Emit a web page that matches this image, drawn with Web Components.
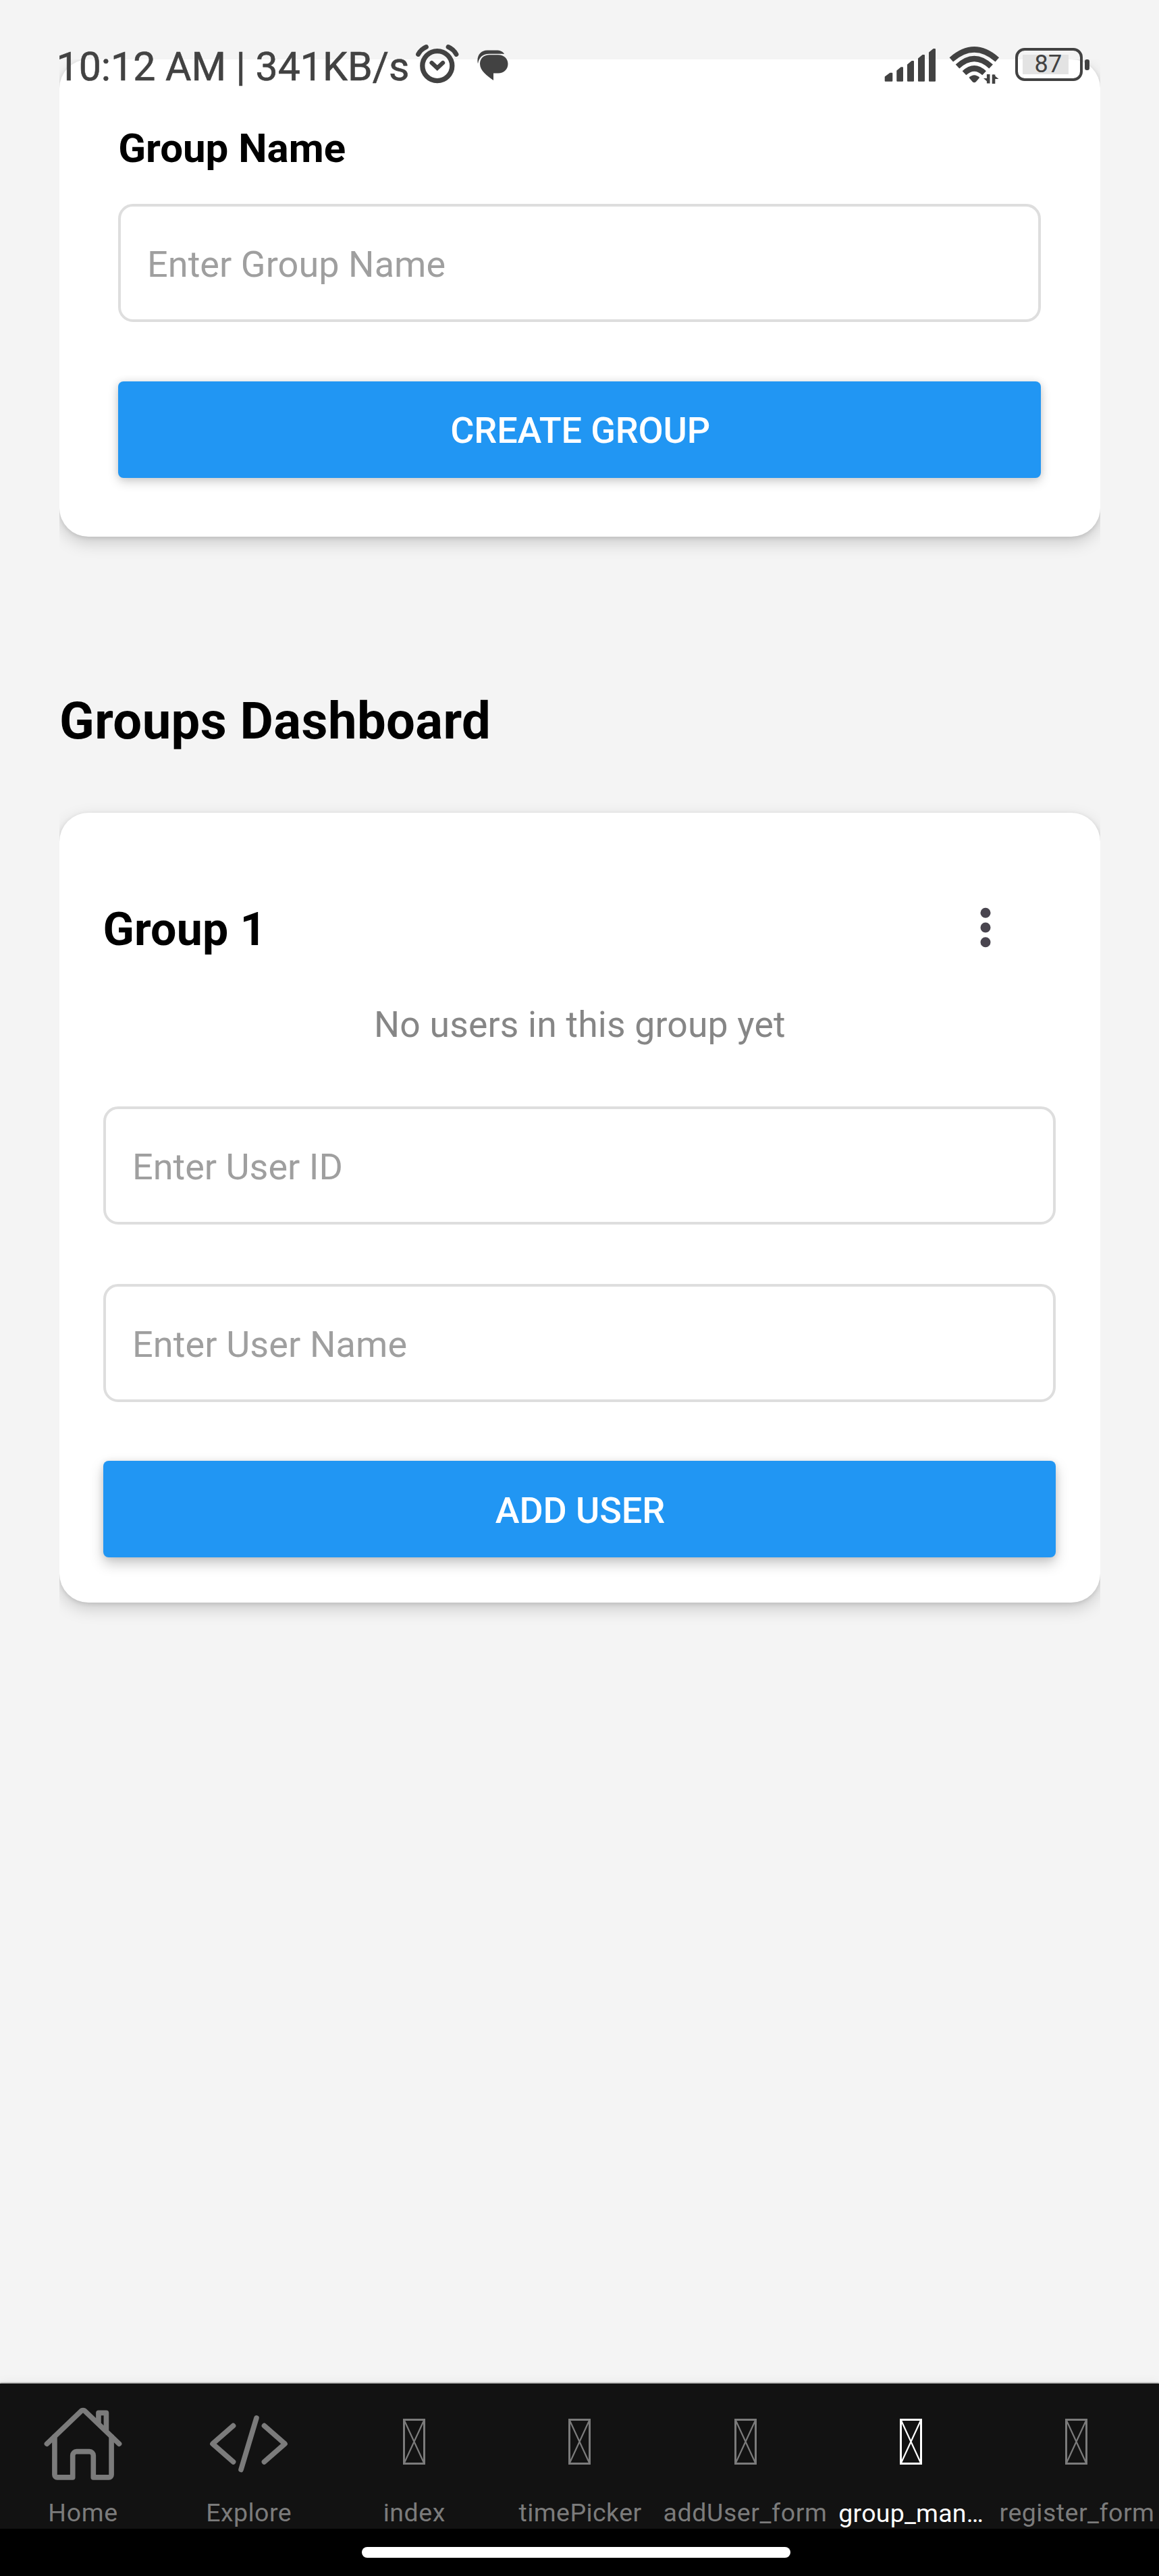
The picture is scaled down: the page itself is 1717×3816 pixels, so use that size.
<!DOCTYPE html>
<html lang="en">
<head>
<meta charset="utf-8">
<title>Groups</title>
<style>
html,body{margin:0;padding:0}
body{font-family:Roboto,"Liberation Sans",sans-serif;background:#f4f4f4}
</style>
</head>
<body>
<groups-app></groups-app>
<script>
const define = (name, html, setup) => {
  const t = document.createElement('template');
  t.innerHTML = html;
  customElements.define(name, class extends HTMLElement {
    connectedCallback() {
      if (this.shadowRoot) return;
      this.attachShadow({ mode: 'open' }).append(t.content.cloneNode(true));
      if (setup) setup(this, this.shadowRoot);
    }
  });
};
const pen = document.createElement('canvas').getContext('2d');

// Single line of text whose ink spans exactly the "ink" width.
define('fit-text', `<style>
:host{display:block;flex:none;white-space:nowrap}
span{display:inline-block}
</style><span><slot></slot></span>`, (el, root) => {
  const size = +el.getAttribute('size'), weight = el.getAttribute('weight') || 400;
  const ink = +el.getAttribute('ink'), text = el.textContent;
  pen.font = `${weight} ${size}px Roboto`;
  const m = pen.measureText(text);
  const gap = (ink - m.actualBoundingBoxRight - m.actualBoundingBoxLeft) / (text.length - 1);
  el.style.cssText += `;width:${ink}px;height:${size * 1.2}px;line-height:${size * 1.2}px;font-size:${size}px;font-weight:${weight}`;
  const s = root.querySelector('span');
  s.style.letterSpacing = gap + 'px';
  s.style.marginLeft = m.actualBoundingBoxLeft + 'px';
});

define('text-field', `<style>
:host{display:flex;box-sizing:border-box;align-items:center;height:175px;border:4px solid #dedede;border-radius:22px;padding:5px 0 0 43px;color:#9f9f9f;background:#fff}
</style><slot></slot>`);

define('action-button', `<style>
:host{display:flex;box-sizing:border-box;align-items:center;justify-content:center;height:143px;border-radius:8px;padding-top:5px;background:#2196f3;color:#fff;box-shadow:0 6px 16px rgba(0,0,0,.17),0 0 12px rgba(0,0,0,.1)}
:host([raised]){box-shadow:0 9px 20px rgba(0,0,0,.22),0 1px 10px rgba(0,0,0,.1)}
</style><slot></slot>`);

define('surface-card', `<style>
:host{display:block;clip-path:inset(-60px 0 -60px 0)}
:host([flush]){clip-path:inset(0 0 -60px 0)}
div{display:flex;flex-direction:column;box-sizing:border-box;background:#fff;border-radius:43px;box-shadow:0 9px 24px rgba(0,0,0,.17),0 2px 7px rgba(0,0,0,.11)}
:host([flush]) div{height:707px;padding:95.5px 88px 0 87px}
:host([group]) div{height:1170.5px;padding:133px 66px 0 65px}
</style><div><slot></slot></div>`);

define('dots-menu', `<style>:host{display:block;width:16px;height:66px;margin:0 96px 6px 0}svg{display:block}</style>
<svg width="16" height="66" viewBox="0 0 16 66" fill="#49454f"><circle cx="8" cy="11.3" r="7.5"/><circle cx="8" cy="33" r="7.5"/><circle cx="8" cy="54.8" r="7.5"/></svg>`);

define('status-bar', `<style>
:host{display:flex;position:absolute;top:0;left:0;width:1717px;height:140px;box-sizing:border-box;padding:63px 0 0 87.5px;color:#424242;align-items:flex-start}
.clock{margin:1px 11px 0 0;-webkit-text-stroke:.6px #424242}
svg{display:block;flex:none}
.msg{margin-left:26px}
.sig{margin-left:auto}
.wifi{margin-left:18px}
.bat{display:flex;align-items:center;width:110px;height:49px;margin:8px 103px 0 22px;}
.cell{position:relative;display:flex;box-sizing:border-box;width:100px;height:48.5px;border:4.6px solid #424242;border-radius:14px;align-items:center;padding-left:7px}
.fill{display:flex;width:68px;height:29px;background:#e3e3e3;align-items:center;padding-left:0}
.fill fit-text{margin:1px 0 0 18.5px}
.nub{width:6.5px;height:16px;border-radius:3px;background:#424242;margin-left:3.3px}
</style>
<fit-text class="clock" size="59" ink="516.5">10:12 AM | 341KB/s</fit-text>
<svg width="66" height="62" viewBox="615 63 66 62" fill="none" stroke="#424242"><circle cx="647.8" cy="97.6" r="22" stroke-width="7.3"/><path d="M619.5 80.500C622 76 626 71.800 631.500 69.500M676 80.500C673.500 76 669.500 71.800 664 69.500" stroke-width="6.800" stroke-linecap="round"/><path d="M639.500 93l8.300 7.800 8.300-7.800" stroke-width="6.200" stroke-linecap="round"/></svg>
<svg class="msg" width="46" height="62" viewBox="707 63 46 62" fill="#424242"><path d="M708 94.500C705.500 84 711 74.500 722 74.500H735C741 74.500 745.500 76.500 747 80C743 79.500 740 79.700 735 79.700H725C715 79.700 709.500 85 708 94.500Z"/><path d="M725 81.300H738C746.500 81.300 752.500 87 752.500 94.700S746.500 108.400 738 108.400H731V119C721.500 112.500 711 104.500 711 94.500C711 86.500 717 81.300 725 81.300Z"/></svg>
<svg class="sig" width="78" height="62" viewBox="1310 63 78 62" fill="#424242" stroke="#424242" stroke-width="2" stroke-linejoin="round"><path d="M1311.700 114l7-5.300h2.600v11h-9.600zM1329.300 105l5.700-4.700h2v19.400h-7.700zM1345 96l6-5h2v28.700h-8zM1361 87l6-5h2v37.700h-8zM1377 78l6-5h2v46.700h-8z"/></svg>
<svg class="wifi" width="76" height="62" viewBox="1406 63 76 62" fill="none" stroke="#424242" stroke-width="8.300"><path d="M1409.300 88.300Q1443.300 58.500 1477.300 88.300M1418.500 98.500Q1443.300 75.500 1468.100 98.500M1428.500 108.300Q1443.300 94.500 1458.100 108.300"/><path d="M1435.500 115Q1443.300 107.500 1451.200 115L1446 121Q1443.300 123.500 1440.600 121Z" fill="#424242" stroke="none"/><path d="M1464.200 110v13.500M1472 124v-13.500" stroke-width="4.600"/><path d="M1465.500 123.500l-8.500-7.500h8.500zM1471 110l8.500 7h-8.500z" fill="#424242" stroke="none"/></svg>
<div class="bat"><div class="cell"><div class="fill"><fit-text size="36" ink="38.500">87</fit-text></div></div><div class="nub"></div></div>`);

const icons = {
  home: '<g transform="translate(.8) scale(.2391)" stroke-width="32" stroke-linecap="round" stroke-linejoin="round"><path d="M80 212v236a16 16 0 0016 16h96V328a24 24 0 0124-24h80a24 24 0 0124 24v136h96a16 16 0 0016-16V212"/><path d="M480 256L266.890 52c-5-5.280-16.690-5.340-21.780 0L32 256M400 179V64h-48v69"/></g>',
  code: '<path transform="translate(.3) scale(.2391)" stroke-width="32" stroke-linecap="round" stroke-linejoin="round" d="M160 368L32 256l128-112M352 368l128-112-128-112M304 96l-96 320"/>',
  missing: '<path d="M46.500 25.500h30v65h-30z" stroke-width="3"/><path d="M46.500 25.500l30 65M76.500 25.500l-30 65" stroke-width="2.200"/>'
};
define('nav-tab', `<style>
:host{display:flex;flex:1 1 0;min-width:0;flex-direction:column;align-items:center;color:#7b7b7b;padding-top:28.300px}
:host([active]){color:#fff}
svg{display:block;flex:none;margin-bottom:18.200px}
</style><svg width="122.400" height="122.400" viewBox="0 0 122.400 122.400" fill="none" stroke="currentColor"></svg><slot></slot>`,
(el, root) => { root.querySelector('svg').innerHTML = icons[el.getAttribute('icon') || 'missing']; });

define('tab-bar', `<style>
:host{display:block;margin-top:auto}
nav{display:flex;height:215px;background:#121212;box-shadow:0 -1px 2px rgba(0,0,0,.5),0 -4px 14px rgba(0,0,0,.04)}
footer{display:flex;height:70px;background:#000;justify-content:center;align-items:flex-start;padding:0 10px 0 0}
i{display:block;width:635px;height:15.700px;border-radius:8px;background:#fff;margin-top:27.300px}
</style><nav>
<nav-tab icon="home"><fit-text size="37.500" ink="99" style="margin-left:2.300px">Home</fit-text></nav-tab>
<nav-tab icon="code"><fit-text size="37.500" ink="122.600" style="margin-left:3px">Explore</fit-text></nav-tab>
<nav-tab><fit-text size="37.500" ink="89" style="margin-left:2px">index</fit-text></nav-tab>
<nav-tab><fit-text size="37.500" ink="182" style="margin-left:2px">timePicker</fit-text></nav-tab>
<nav-tab><fit-text size="37.500" ink="238.500">addUser_form</fit-text></nav-tab>
<nav-tab active><fit-text size="37.500" ink="211.500" style="margin-top:1.500px">group_man…</fit-text></nav-tab>
<nav-tab><fit-text size="37.500" ink="225.500" style="margin-left:2px">register_form</fit-text></nav-tab>
</nav><footer><i></i></footer>`);

define('groups-app', `<style>
:host{display:flex;position:relative;flex-direction:column;width:1717px;height:3816px;background:#f4f4f4;overflow:hidden;color:#000}
main{display:flex;flex-direction:column;padding:88px 87px 0 88px}
.title{margin:228.200px 0 89.200px 3px}
header{display:flex;justify-content:space-between;align-items:center;height:81.600px;padding-left:2.500px}
header fit-text{margin-top:1.400px}
.empty{color:#868686;align-self:center;margin:67.400px 0 89.300px 3px}
</style>
<main>
<surface-card flush>
<fit-text size="60" weight="700" ink="333.500" style="margin:0 0 46.500px 2.200px">Group Name</fit-text>
<text-field><fit-text size="54" ink="436.500">Enter Group Name</fit-text></text-field>
<action-button style="margin-top:87.500px"><fit-text size="54" weight="500" ink="381.500" style="margin-left:3px">CREATE GROUP</fit-text></action-button>
</surface-card>
<fit-text class="title" size="76" weight="700" ink="632">Groups Dashboard</fit-text>
<surface-card group>
<header><fit-text size="68" weight="700" ink="227">Group 1</fit-text><dots-menu></dots-menu></header>
<fit-text class="empty" size="53.500" ink="604">No users in this group yet</fit-text>
<text-field><fit-text size="54" ink="305.500">Enter User ID</fit-text></text-field>
<text-field style="margin-top:88px"><fit-text size="54" ink="401.500">Enter User Name</fit-text></text-field>
<action-button raised style="margin-top:87px"><fit-text size="54" weight="500" ink="250.500" style="margin-left:1px">ADD USER</fit-text></action-button>
</surface-card>
</main>
<tab-bar></tab-bar>
<status-bar></status-bar>`);
</script>
</body>
</html>
